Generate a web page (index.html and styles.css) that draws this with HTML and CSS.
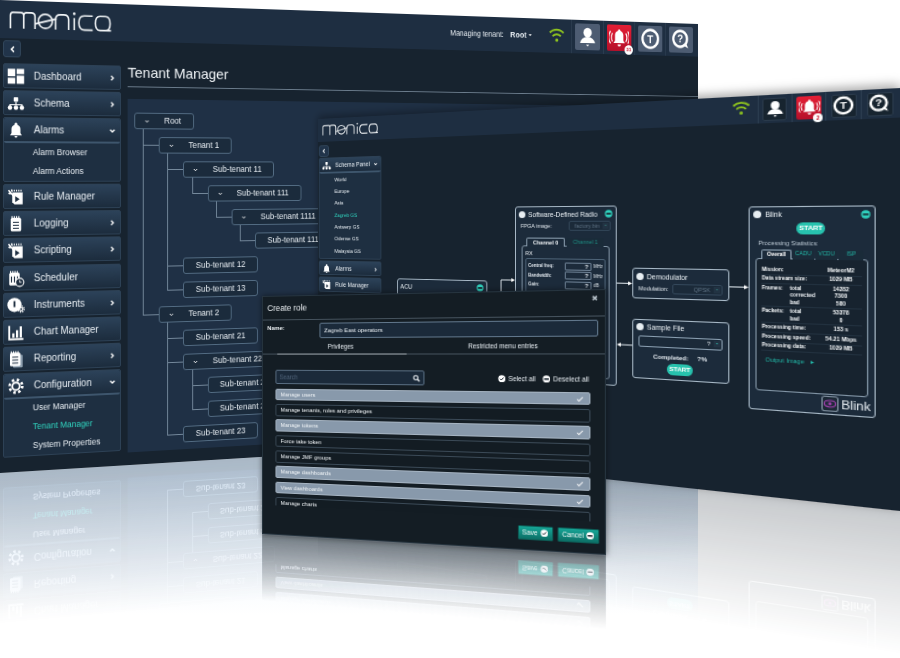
FILE: index.html
```html
<!DOCTYPE html>
<html lang="en">
<head>
<meta charset="utf-8">
<title>Monica</title>
<link rel="stylesheet" href="styles.css">
</head>
<body>
<svg class="sprite" aria-hidden="true">
  <symbol id="i-dash" viewBox="0 0 24 24"><rect x="1" y="2" width="10" height="10"/><rect x="13" y="2" width="10" height="7"/><rect x="1" y="14" width="10" height="8"/><rect x="13" y="11" width="10" height="11"/></symbol>
  <symbol id="i-schema" viewBox="0 0 24 24"><rect x="9" y="4" width="6" height="6" rx="1"/><path d="M12 10v4M4 16v-2h16v2" fill="none" stroke="currentColor" stroke-width="1.500"/><circle cx="4" cy="18" r="3"/><circle cx="12" cy="18" r="3"/><circle cx="20" cy="18" r="3"/></symbol>
  <symbol id="i-bell" viewBox="0 0 24 24"><path d="M12 2a2 2 0 0 1 2 2v1a6 6 0 0 1 4 6v5l2 3H4l2-3v-5a6 6 0 0 1 4-6V4a2 2 0 0 1 2-2zM10 20h4a2 2 0 0 1-4 0z"/></symbol>
  <symbol id="i-rule" viewBox="0 0 24 24"><path d="M7 6h14v16H10l-3-3z"/><path d="M2 3l7 8M6 2l1 3M2 7l3 1" fill="none" stroke="currentColor" stroke-width="2"/><path d="M9 3.500h12" stroke="currentColor" stroke-width="2.500" stroke-dasharray="1.500 1.500"/><path d="M11 11l6 4-6 4z" fill="#1d2d3f"/></symbol>
  <symbol id="i-log" viewBox="0 0 24 24"><rect x="5" y="4" width="14" height="18" rx="2"/><path d="M6 3h12" stroke="currentColor" stroke-width="3" stroke-dasharray="1.500 1.500"/><path d="M8 10h8M8 14h8M8 18h8" stroke="#1d2d3f" stroke-width="1.500"/></symbol>
  <symbol id="i-sched" viewBox="0 0 24 24"><rect x="3" y="4" width="14" height="17" rx="2"/><path d="M4 3h12" stroke="currentColor" stroke-width="3" stroke-dasharray="1.500 1.500"/><path d="M6 9v8M10 9v8M14 9v4" stroke="#1d2d3f" stroke-width="1.500"/><circle cx="17" cy="17" r="5.500" fill="#1d2d3f" stroke="currentColor" stroke-width="1.500"/><path d="M17 14v3h2.500" fill="none" stroke="currentColor" stroke-width="1.200"/></symbol>
  <symbol id="i-inst" viewBox="0 0 24 24"><circle cx="10" cy="11" r="9.500"/><path d="M10 6v8" stroke="#1d2d3f" stroke-width="2.500"/><circle cx="19" cy="17" r="2.200" fill="none" stroke="currentColor" stroke-width="1.500"/><circle cx="19" cy="17" r="4" fill="none" stroke="currentColor" stroke-width="1.800" stroke-dasharray="1.600 1.540"/></symbol>
  <symbol id="i-chart" viewBox="0 0 24 24"><path d="M3 3v18h19" fill="none" stroke="currentColor" stroke-width="2.500"/><rect x="7" y="13" width="3" height="6"/><rect x="12" y="9" width="3" height="10"/><rect x="17" y="4" width="3" height="15"/></symbol>
  <symbol id="i-report" viewBox="0 0 24 24"><rect x="8" y="6" width="13" height="17" rx="1.500" fill="#8fa0b0"/><rect x="4" y="3" width="14" height="18" rx="2"/><path d="M5 2.500h12" stroke="currentColor" stroke-width="3" stroke-dasharray="1.500 1.500"/><path d="M7 9h8M7 13h8M7 17h8" stroke="#1d2d3f" stroke-width="1.500"/></symbol>
  <symbol id="i-gear" viewBox="0 0 24 24"><circle cx="12" cy="12" r="5" fill="none" stroke="currentColor" stroke-width="2.500"/><circle cx="12" cy="12" r="8.500" fill="none" stroke="currentColor" stroke-width="3.500" stroke-dasharray="3.300 3.374"/></symbol>
  <symbol id="i-user" viewBox="0 0 24 24"><circle cx="12" cy="7.500" r="5"/><path d="M12 12c-5 0-8 3-9 6.500h18C20 15 17 12 12 12zM10 20h4l-2 2z"/></symbol>
  <symbol id="i-alarm" viewBox="0 0 24 24"><path d="M12 3a1.500 1.500 0 0 1 1.500 1.500A5 5 0 0 1 17 9v6l2 2.500H5L7 15V9a5 5 0 0 1 3.500-4.500A1.500 1.500 0 0 1 12 3zM10 19h4a2 2 0 0 1-4 0z"/><path d="M4 7a9 9 0 0 0 0 9M1.500 5a13 13 0 0 0 0 13M20 7a9 9 0 0 1 0 9M22.500 5a13 13 0 0 1 0 13" fill="none" stroke="currentColor" stroke-width="1.300"/></symbol>
  <symbol id="i-wifi" viewBox="0 0 24 24"><path d="M2 9.500a14.500 14.500 0 0 1 20 0M6 14a8.500 8.500 0 0 1 12 0" fill="none" stroke="currentColor" stroke-width="2.600"/><circle cx="12" cy="19" r="2.200"/></symbol>
  <symbol id="i-check" viewBox="0 0 24 24"><circle cx="12" cy="12" r="11"/><path d="M6.500 12l4 4 7-8" fill="none" stroke="#16212b" stroke-width="3"/></symbol>
  <symbol id="i-minus" viewBox="0 0 24 24"><circle cx="12" cy="12" r="11"/><rect x="5" y="9.500" width="14" height="5" fill="#16212b"/></symbol>
  <symbol id="i-tick" viewBox="0 0 24 24"><path d="M3 13l6 6L21 6" fill="none" stroke="currentColor" stroke-width="3"/></symbol>
  <symbol id="i-search" viewBox="0 0 24 24"><circle cx="10" cy="10" r="6.500" fill="none" stroke="currentColor" stroke-width="3"/><path d="M15 15l6 6" stroke="currentColor" stroke-width="4"/></symbol>
  <symbol id="i-down" viewBox="0 0 24 24"><path d="M5 8l7 7 7-7" fill="none" stroke="currentColor" stroke-width="4"/></symbol>
  <symbol id="i-right" viewBox="0 0 24 24"><path d="M8 5l7 7-7 7" fill="none" stroke="currentColor" stroke-width="4"/></symbol>
  <symbol id="i-left" viewBox="0 0 24 24"><path d="M16 5l-7 7 7 7" fill="none" stroke="currentColor" stroke-width="4"/></symbol>
  <symbol id="i-logo" viewBox="0 0 110 22">
    <g fill="none" stroke="currentColor" stroke-width="1.700">
      <path d="M1 20V6q0-3 3-3h8q3 0 3 3v14M15 6q0-3 3-3h5q4 0 4 4v13"/>
      <circle cx="38" cy="11.500" r="7.500"/>
      <path d="M27 14.500l23-6"/>
      <path d="M49 20V9q0-5 5-5h4q5 0 5 5v11"/>
      <path d="M69 7v13"/>
      <path d="M89 4.500H80q-6 0-6 7.500T80 19.500h9"/>
      <path d="M100 4.500h-3q-5 0-5 7.500T97 19.500h6q5 0 5-7.500T103 4.500zM104 19.500h5"/>
    </g>
    <circle cx="69" cy="2.500" r="1.400" fill="currentColor"/>
  </symbol>
</svg>

<main class="stage">
  <div class="floor"></div>

  <!-- Tenant Manager window -->
  <section class="window win-tenant">
    <header class="topbar tenant-topbar">
      <svg class="logo logo-lg" role="img" aria-label="monica"><use href="#i-logo"/></svg>
      <div class="topbar-tools">
        <span class="managing">Managing tenant:</span>
        <strong class="managing-root">Root <i class="caret"></i></strong>
        <svg class="wifi"><use href="#i-wifi"/></svg>
        <span class="sep"></span>
        <span class="tool"><svg><use href="#i-user"/></svg></span>
        <span class="sep"></span>
        <span class="tool tool-red"><svg><use href="#i-alarm"/></svg><b class="badge">31</b></span>
        <span class="sep"></span>
        <span class="tool"><svg viewBox="0 0 24 24"><circle cx="12" cy="12" r="9.500" fill="none" stroke="#fff" stroke-width="2.800"/><text x="12" y="16.500" class="glyph">T</text></svg></span>
        <span class="sep"></span>
        <span class="tool"><svg viewBox="0 0 24 24"><circle cx="11" cy="11" r="8.500" fill="none" stroke="#fff" stroke-width="2.800"/><path d="M15 18l6 3-3-6z" fill="#fff"/><text x="11" y="15" class="glyph">?</text></svg></span>
      </div>
    </header>
    <div class="tenant-body">
      <div class="tenant-side">
        <button class="back"><svg><use href="#i-left"/></svg></button>
        <nav class="menu">
          <a class="menu-item"><svg class="mi"><use href="#i-dash"/></svg>Dashboard<svg class="chev"><use href="#i-right"/></svg></a>
          <a class="menu-item"><svg class="mi"><use href="#i-schema"/></svg>Schema<svg class="chev"><use href="#i-right"/></svg></a>
          <div class="menu-open">
            <a class="menu-item"><svg class="mi"><use href="#i-bell"/></svg>Alarms<svg class="chev"><use href="#i-down"/></svg></a>
            <ul class="submenu"><li>Alarm Browser</li><li>Alarm Actions</li></ul>
          </div>
          <a class="menu-item"><svg class="mi"><use href="#i-rule"/></svg>Rule Manager</a>
          <a class="menu-item"><svg class="mi"><use href="#i-log"/></svg>Logging<svg class="chev"><use href="#i-right"/></svg></a>
          <a class="menu-item"><svg class="mi"><use href="#i-rule"/></svg>Scripting<svg class="chev"><use href="#i-right"/></svg></a>
          <a class="menu-item"><svg class="mi"><use href="#i-sched"/></svg>Scheduler</a>
          <a class="menu-item"><svg class="mi"><use href="#i-inst"/></svg>Instruments<svg class="chev"><use href="#i-right"/></svg></a>
          <a class="menu-item"><svg class="mi"><use href="#i-chart"/></svg>Chart Manager</a>
          <a class="menu-item"><svg class="mi"><use href="#i-report"/></svg>Reporting<svg class="chev"><use href="#i-right"/></svg></a>
          <div class="menu-open">
            <a class="menu-item"><svg class="mi"><use href="#i-gear"/></svg>Configuration<svg class="chev"><use href="#i-down"/></svg></a>
            <ul class="submenu"><li>User Manager</li><li class="active">Tenant Manager</li><li>System Properties</li></ul>
          </div>
        </nav>
      </div>
      <div class="tenant-main">
        <h1 class="page-title">Tenant Manager</h1>
        <div class="tree-panel">
          <ul class="tree">
            <li><span class="tn has"><svg><use href="#i-down"/></svg>Root</span>
              <ul>
                <li><span class="tn has"><svg><use href="#i-down"/></svg>Tenant 1</span>
                  <ul>
                    <li><span class="tn has"><svg><use href="#i-down"/></svg>Sub-tenant 11</span>
                      <ul>
                        <li><span class="tn has"><svg><use href="#i-down"/></svg>Sub-tenant 111</span>
                          <ul>
                            <li><span class="tn has"><svg><use href="#i-down"/></svg>Sub-tenant 1111</span>
                              <ul><li><span class="tn">Sub-tenant 11111</span></li></ul>
                            </li>
                          </ul>
                        </li>
                      </ul>
                    </li>
                    <li><span class="tn">Sub-tenant 12</span></li>
                    <li><span class="tn">Sub-tenant 13</span></li>
                  </ul>
                </li>
                <li><span class="tn has"><svg><use href="#i-down"/></svg>Tenant 2</span>
                  <ul>
                    <li><span class="tn">Sub-tenant 21</span></li>
                    <li><span class="tn has"><svg><use href="#i-down"/></svg>Sub-tenant 22</span>
                      <ul>
                        <li><span class="tn">Sub-tenant 221</span></li>
                        <li><span class="tn">Sub-tenant 222</span></li>
                      </ul>
                    </li>
                    <li><span class="tn">Sub-tenant 23</span></li>
                  </ul>
                </li>
              </ul>
            </li>
          </ul>
        </div>
      </div>
    </div>
  </section>

  <!-- Schema window -->
  <section class="window win-schema">
    <header class="topbar schema-topbar">
      <svg class="logo logo-sm" role="img" aria-label="monica"><use href="#i-logo"/></svg>
      <div class="schema-tools">
        <svg class="wifi"><use href="#i-wifi"/></svg>
        <span class="sep"></span>
        <span class="tool tool-dark"><svg><use href="#i-user"/></svg></span>
        <span class="sep"></span>
        <span class="tool tool-red"><svg><use href="#i-alarm"/></svg><b class="badge">2</b></span>
        <span class="sep"></span>
        <span class="tool tool-dark"><svg viewBox="0 0 24 24"><circle cx="12" cy="12" r="9.500" fill="none" stroke="#fff" stroke-width="2.800"/><text x="12" y="16.500" class="glyph">T</text></svg></span>
        <span class="sep"></span>
        <span class="tool tool-dark"><svg viewBox="0 0 24 24"><circle cx="11" cy="11" r="8.500" fill="none" stroke="#fff" stroke-width="2.800"/><path d="M15 18l6 3-3-6z" fill="#fff"/><text x="11" y="15" class="glyph">?</text></svg></span>
      </div>
    </header>
    <aside class="schema-side">
      <button class="back"><svg><use href="#i-left"/></svg></button>
      <div class="menu-open">
        <a class="menu-item"><svg class="mi"><use href="#i-schema"/></svg>Schema Panel<svg class="chev"><use href="#i-down"/></svg></a>
        <ul class="submenu"><li>World</li><li>Europe</li><li>Asia</li><li class="active">Zagreb GS</li><li>Antwerp GS</li><li>Odense GS</li><li>Malaysia GS</li></ul>
      </div>
      <a class="menu-item"><svg class="mi"><use href="#i-bell"/></svg>Alarms<svg class="chev"><use href="#i-right"/></svg></a>
      <a class="menu-item"><svg class="mi"><use href="#i-rule"/></svg>Rule Manager</a>
    </aside>

    <svg class="wires" viewBox="0 0 582 372">
      <path d="M216 200V177H229M335 177.500H348M440 178.500H455M350 238H337"/>
      <path class="tip" d="M227 175l4 2-4 2zM346 175.500l4 2-4 2zM453 176.500l4 2-4 2zM339 236l-4 2 4 2z"/>
    </svg>

    <section class="node node-acu">
      <header class="node-head"><h3>ACU</h3><svg class="node-min"><use href="#i-minus"/></svg></header>
    </section>

    <section class="node node-sdr">
      <header class="node-head"><span class="dot"></span><h3>Software-Defined Radio</h3><svg class="node-min"><use href="#i-minus"/></svg></header>
      <div class="field"><label>FPGA image:</label><span class="select sel-fpga">factory.bin<i></i></span></div>
      <div class="tabs"><span class="tab on">Channel 0</span><span class="tab">Channel 1</span></div>
      <div class="tab-panel">
        <div class="rx-title">RX</div>
        <div class="rx-box">
          <div class="rx-row"><label>Central freq:</label><span class="rx-val">?</span><em>MHz</em></div>
          <div class="rx-row"><label>Bandwidth:</label><span class="rx-val">?</span><em>MHz</em></div>
          <div class="rx-row"><label>Gain:</label><span class="rx-val">?</span><em>dB</em></div>
        </div>
      </div>
    </section>

    <section class="node node-demod">
      <header class="node-head"><span class="dot"></span><h3>Demodulator</h3></header>
      <div class="field"><label>Modulation:</label><span class="select sel-qpsk">QPSK<i></i></span></div>
    </section>

    <section class="node node-sample">
      <header class="node-head"><span class="dot"></span><h3>Sample File</h3></header>
      <span class="select sel-file">?<i class="on"></i></span>
      <div class="completed"><span>Completed:</span><span>?%</span></div>
      <span class="pill pill-sample">START</span>
    </section>

    <section class="node node-blink">
      <header class="node-head"><span class="dot"></span><h3>Blink</h3><svg class="node-min"><use href="#i-minus"/></svg></header>
      <span class="pill pill-blink">START</span>
      <div class="stats-title">Processing Statistics:</div>
      <div class="tabs blink-tabs"><span class="tab on">Overall</span><span class="tab">CADU</span><span class="tab">VCDU</span><span class="tab">ISP</span></div>
      <div class="tab-panel stats">
        <div class="st-row"><b>Mission:</b><span></span><b>MeteorM2</b></div>
        <div class="st-row"><b>Data stream size:</b><span></span><b>1029 MB</b></div>
        <div class="st-row"><b>Frames:</b><span>total<br>corrected<br>bad</span><b>14282<br>7300<br>580</b></div>
        <div class="st-row"><b>Packets:</b><span>total<br>bad</span><b>53378<br>0</b></div>
        <div class="st-row"><b>Processing time:</b><span></span><b>153 s</b></div>
        <div class="st-row"><b>Processing speed:</b><span></span><b>54.21 Mbps</b></div>
        <div class="st-row"><b>Processing data:</b><span></span><b>1029 MB</b></div>
        <div class="output">Output Image <i>&#9656;</i></div>
      </div>
      <div class="blink-logo">
        <svg viewBox="0 0 24 24"><rect x="1" y="1" width="22" height="22" rx="3" fill="#1c2936" stroke="#9fb0c0" stroke-width="1.500"/><ellipse cx="12" cy="12" rx="8" ry="5" fill="none" stroke="#9a3fa8" stroke-width="1.800"/><circle cx="12" cy="12" r="2.500" fill="#9a3fa8"/></svg>
        <span>Blink</span>
      </div>
    </section>
  </section>

  <!-- Create role dialog -->
  <section class="window win-dialog">
    <header class="dlg-head"><h2>Create role</h2><span class="dlg-close">&#10006;</span></header>
    <div class="dlg-name"><label>Name:</label><span class="dlg-input">Zagreb East operators</span></div>
    <div class="dlg-tabs"><span class="dlg-tab on">Privileges</span><span class="dlg-tab">Restricted menu entries</span></div>
    <div class="dlg-tools">
      <span class="dlg-search">Search<svg><use href="#i-search"/></svg></span>
      <span class="dlg-all"><svg><use href="#i-check"/></svg>Select all</span>
      <span class="dlg-all"><svg><use href="#i-minus"/></svg>Deselect all</span>
    </div>
    <ul class="priv-list">
      <li class="on">Manage users<svg><use href="#i-tick"/></svg></li>
      <li>Manage tenants, roles and privileges</li>
      <li class="on">Manage tokens<svg><use href="#i-tick"/></svg></li>
      <li>Force take token</li>
      <li>Manage JMF groups</li>
      <li class="on">Manage dashboards<svg><use href="#i-tick"/></svg></li>
      <li class="on">View dashboards<svg><use href="#i-tick"/></svg></li>
      <li>Manage charts</li>
    </ul>
    <div class="dlg-actions">
      <button class="btn">Save<svg><use href="#i-check"/></svg></button>
      <button class="btn">Cancel<svg><use href="#i-minus"/></svg></button>
    </div>
  </section>
</main>
</body>
</html>
```
FILE: styles.css
```css
* { box-sizing: border-box; }
html, body { margin: 0; padding: 0; background: #fff; }
body { font-family: "Liberation Sans", Arial, sans-serif; color: #e8eef3; }
.sprite { position: absolute; width: 0; height: 0; }
.stage { position: relative; width: 900px; height: 658px; overflow: hidden; background: #fff; }
ul { list-style: none; margin: 0; padding: 0; }
h1, h2, h3 { margin: 0; font-weight: normal; }
a { display: flex; }
svg { fill: currentColor; }
.glyph { font: bold 12px "Liberation Sans", Arial, sans-serif; fill: #fff; text-anchor: middle; }

/* Faint blue floor tint under the reflection of the tenant window */
.floor { position: absolute; left: 0; top: 420px; width: 698px; height: 195px; background: linear-gradient(#dcebfa 25%, #fff); clip-path: polygon(0 53px, 100% 10px, 100% 100%, 0 100%); }

/* Windows sit on a free canvas; each one is warped to its perspective quad. */
.window { position: absolute; left: 0; top: 0; transform-origin: 0 0; overflow: hidden; background: #17232f; }
.win-tenant {
  width: 813px; height: 473px;
  transform: matrix3d(1.00023,.03439,0,.00020299, 0,1,0,0, 0,0,1,0, 0,0,0,1);
  -webkit-box-reflect: below 0 linear-gradient(to bottom, transparent 68%, rgba(0,0,0,.13) 85%, rgba(0,0,0,.26));
}
.win-schema {
  width: 582px; height: 372px;
  transform: matrix3d(.65636,-.086866,0,-.00038183, 0,.88441,0,0, 0,0,1,0, 318,119,0,1);
  box-shadow: 0 -3px 9px rgba(0,0,0,.35);
  -webkit-box-reflect: below 0 linear-gradient(to bottom, transparent 66%, rgba(0,0,0,.24));
}
.win-dialog {
  width: 344px; height: 252px; background: #141d24; border: 1px solid #26343f;
  transform: matrix3d(.81456,-.10878,0,-.00030599, 0,.94444,0,0, 0,0,1,0, 262,296,0,1);
  box-shadow: 0 0 6px rgba(0,0,0,.5);
  -webkit-box-reflect: below 0 linear-gradient(to bottom, transparent 72%, rgba(0,0,0,.5));
}

/* Top bars */
.topbar { display: flex; justify-content: space-between; align-items: center; background: #1e2e41; }
.tenant-topbar { height: 38px; padding-left: 8px; }
.schema-topbar { height: 26px; padding-left: 5px; }
.logo { color: #f2f5f7; display: block; }
.logo-lg { width: 108px; height: 21px; }
.logo-sm { width: 71px; height: 14px; }
.topbar-tools { display: flex; align-items: center; height: 100%; padding-right: 3px; }
.managing { font-size: 8.500px; margin-right: 8px; }
.managing-root { font-size: 9px; margin-right: 21px; }
.caret { display: inline-block; border: 2px solid transparent; border-top-color: #fff; border-bottom: 0; vertical-align: 2px; }
.wifi { color: #8dc21f; }
.topbar-tools .wifi { width: 21px; height: 21px; margin: -4px 8px 0 0; }
.sep { width: 1px; height: 100%; background: #2b3d50; }
.tool { position: relative; display: flex; align-items: center; justify-content: center; width: 32px; height: 30px; margin: 0 4px; background: #4d5c72; border-radius: 2px; color: #fff; }
.tool svg { width: 26px; height: 26px; }
.tool-red { background: linear-gradient(#e41f35, #b5102a); }
.badge { position: absolute; right: -2px; bottom: -4px; width: 11px; height: 11px; border-radius: 50%; background: #fff; color: #c8142c; font-size: 6px; line-height: 11px; text-align: center; }
.schema-tools { display: flex; align-items: center; height: 100%; padding-right: 2px; }
.schema-tools .wifi { width: 17px; height: 17px; margin: -5px 6px 0 0; }
.schema-tools .tool { width: 21px; height: 21px; margin: 0 3.400px; }
.schema-tools .tool svg { width: 18px; height: 18px; }
.tool-dark { background: #17242f; border: 1px solid #2a3a4b; }
.schema-tools .badge { width: 8px; height: 8px; font-size: 5px; line-height: 8px; bottom: -3px; right: -1px; }

/* Tenant window body */
.tenant-body { display: flex; height: 435px; background: #17232f; }
.tenant-side { width: 126px; padding: 2px 2px 0 3px; flex: none; }
.back { display: flex; align-items: center; justify-content: center; width: 18px; height: 17px; padding: 0; margin-bottom: 6px; border: 1px solid #31465b; border-radius: 3px; background: #21344a; color: #fff; }
.back svg { width: 9px; height: 10px; }
.menu { display: flex; flex-direction: column; gap: 2.100px; }
.menu-item { display: flex; align-items: center; height: 25px; padding-left: 30px; position: relative; font-size: 10px; color: #e8eef3; background: linear-gradient(#2c4259, #1c2c3d); border: 1px solid #2d4155; border-radius: 2px; }
.mi { position: absolute; left: 3px; top: 3px; width: 18px; height: 18px; color: #fff; }
.chev { position: absolute; right: 4px; top: 8px; width: 8px; height: 8px; color: #fff; }
.menu-open { background: #1e2f41; border: 1px solid #2d4155; border-radius: 2px; }
.menu-open > .menu-item { border-width: 0 0 2px; border-bottom-color: #3e566d; }
.submenu { padding-left: 29px; font-size: 8.500px; }
.submenu li { height: 19px; line-height: 19px; }
.submenu .active { color: #30d5c0; }

.tenant-main { flex: 1; display: flex; flex-direction: column; padding-left: 5px; }
.page-title { height: 47px; padding-top: 23px; font-size: 15px; line-height: 18px; color: #eef2f5; border-bottom: 1px solid #6b7c8c; }
.tree-panel { margin-top: 12px; height: 363px; background: #1f3045; padding: 5.500px 0 0 6.700px; overflow: hidden; font-size: 8.700px; }
.tree ul { padding-left: 26.300px; }
.tree li { position: relative; padding-top: 8.500px; }
.tree > li { padding-top: 8.500px; }
.tree ul > li::before { content: ""; position: absolute; left: -16.800px; top: 0; bottom: 0; width: 1px; background: #75899c; }
.tree ul > li::after { content: ""; position: absolute; left: -16.800px; top: 16.750px; width: 16.800px; height: 1px; background: #75899c; }
.tree ul > li:last-child::before { bottom: auto; height: 17px; }
.tn { position: relative; z-index: 1; display: inline-block; height: 16.500px; line-height: 14.500px; padding: 0 13px 0 12.500px; border: 1px solid #536c83; border-radius: 3px; background: #1b2b3c; color: #e8eef3; }
.tn.has { padding-left: 31px; }
.tn svg { position: absolute; left: 9px; top: 4.500px; width: 7px; height: 6px; color: #fff; }

/* Schema window */
.schema-side { position: absolute; left: 1px; top: 30px; width: 78px; }
.schema-side .back { width: 13px; height: 13px; margin-bottom: 1px; }
.schema-side .back svg { width: 7px; height: 7px; }
.schema-side .menu-item { height: 16.500px; padding-left: 20px; font-size: 6.600px; }
.schema-side .mi { left: 3px; top: 2px; width: 12px; height: 12px; }
.schema-side .chev { top: 5px; right: 3px; width: 6px; height: 6px; }
.schema-side .submenu { padding: 1.300px 0 1px 19px; font-size: 5.800px; }
.schema-side .submenu li { height: 13.300px; line-height: 13.300px; }
.schema-side > .menu-item { margin-top: 2px; }

.wires { position: absolute; left: 0; top: 0; width: 582px; height: 372px; fill: none; stroke: #dfe7ed; stroke-width: 1; }
.wires .tip { fill: #fff; stroke: none; }

.node { position: absolute; padding: 1px 3px; background: #1c2b3b; border: 1px solid #a9bac8; border-radius: 3px; font-size: 5.500px; color: #dfe6ec; }
.node-head { display: flex; align-items: center; gap: 3px; height: 12px; }
.node-head h3 { flex: 1; font-size: 6.700px; color: #eaf0f4; white-space: nowrap; }
.dot { width: 7px; height: 7px; border-radius: 50%; background: #e8eef2; }
.node-min { width: 8px; height: 8px; color: #2fd0bd; }
.node-acu { left: 97.800px; top: 178px; width: 103px; height: 80px; }
.node-sdr { left: 231px; top: 101px; width: 104px; height: 178px; }
.node-demod { left: 350px; top: 162.400px; width: 90px; height: 30px; }
.node-sample { left: 350px; top: 211.700px; width: 90px; height: 58px; }
.node-blink { left: 457.400px; top: 102.600px; width: 105.600px; height: 189px; }

.field { display: flex; align-items: center; justify-content: space-between; margin-top: 1px; padding: 0 2px; }
.select { position: relative; display: block; height: 10px; line-height: 8px; padding-right: 10px; text-align: right; background: #1b2a39; border: 1px solid #33475a; border-radius: 2px; color: #5e7284; }
.select i { position: absolute; right: 1px; top: 1px; width: 6px; height: 6px; background: #223343; }
.select i::after { content: ""; position: absolute; left: 1.500px; top: 2px; border: 1.500px solid transparent; border-top-color: #3a8f8a; border-bottom: 0; }
.select i.on::after { border-top-color: #33d1bd; }
.sel-fpga { width: 42px; }
.sel-qpsk { width: 46px; }
.sel-file { margin: 2px 2px 0; height: 11px; line-height: 9px; color: #dfe6ec; border-color: #8ba0b2; }
.tabs { display: flex; gap: 2px; margin: 7px 0 0 8px; }
.tab { height: 9px; line-height: 8px; padding: 0 6px; border-radius: 2px 2px 0 0; background: #1a2b39; color: #1e8f85; }
.tab.on { color: #f0f4f7; background: #1c2b3b; border: 1px solid #90a4b5; border-bottom: 0; font-weight: bold; }
.tab-panel { margin: -1px 3px 0; height: 132px; border: 1px solid #8295a6; border-radius: 3px; background: #1c2b3b; padding: 4px 3px; }
.rx-title { color: #f0f4f7; height: 6px; line-height: 6px; }
.rx-box { margin-top: 2px; padding: 2px; border: 1px solid #4e6478; border-radius: 2px; height: 40px; }
.rx-row { display: flex; align-items: center; gap: 2px; height: 9.500px; font-size: 4.500px; }
.rx-row label { flex: 1; font-weight: bold; }
.rx-val { width: 27px; height: 8px; line-height: 6.500px; padding-right: 2px; text-align: right; border: 1px solid #718599; border-radius: 1px; font-size: 6px; font-weight: bold; }
.rx-row em { width: 9px; font-style: normal; }
.completed { display: flex; justify-content: center; gap: 8px; margin-top: 6px; font-size: 6px; font-weight: bold; }
.pill { display: block; width: 24px; height: 11px; margin: 1.500px auto 0; border-radius: 6px; background: #27c2ae; color: #fff; font-size: 6px; font-weight: bold; line-height: 11px; text-align: center; }
.pill-sample { margin-top: 3px; }
.stats-title { margin: 5px 0 0 4px; font-size: 5.400px; color: #b8c5d0; }
.blink-tabs { margin: 3px 0 0 7px; gap: 1px; }
.blink-tabs .tab { padding: 0 2.400px; height: 9px; font-size: 4.800px; color: #22b3a4; }
.blink-tabs .tab.on { color: #fff; padding: 0 3.500px; }
.blink-tabs .tab:last-child { padding: 0 6px; }
.stats { margin: -1px 2px 0; padding: 6px 4px 0; height: 123px; background: #17232f; }
.st-row { display: grid; grid-template-columns: 24px 1fr 34px; padding: .800px 0 .500px; border-bottom: 1px solid #22313f; font-size: 4.700px; line-height: 6.300px; }
.st-row span { color: #f0f4f7; font-weight: bold; }
.st-row b { white-space: nowrap; color: #f4f7f9; }
.st-row > b:last-child { text-align: center; }
.output { margin: 5px 0 0 3px; font-size: 5.500px; color: #22b3a4; }
.output i { font-style: normal; margin-left: 4px; }
.blink-logo { display: flex; align-items: center; justify-content: flex-end; gap: 2px; margin-top: 1px; color: #e8eef3; font-size: 11px; line-height: 14px; }
.blink-logo svg { width: 14px; height: 14px; }

/* Dialog */
.dlg-head { position: relative; display: flex; align-items: center; height: 24.500px; padding-left: 5px; border-bottom: 1px solid #46535e; }
.dlg-head h2 { font-size: 8.800px; color: #eef2f5; }
.dlg-close { position: absolute; right: 6px; top: 4px; font-size: 7px; color: #b8c2ca; }
.dlg-name { display: flex; align-items: flex-start; height: 21px; padding: 3px 6px 0 5px; font-size: 6.200px; }
.dlg-name label { width: 57px; padding-top: 1px; font-weight: bold; color: #eef2f5; }
.dlg-input { flex: 1; height: 16.500px; line-height: 14.500px; padding-left: 4px; background: #1b2a3a; border: 1px solid #62788d; border-radius: 2px; }
.dlg-tabs { display: grid; grid-template-columns: 137px 1fr; height: 15px; padding-left: 16px; margin-right: 0; border-bottom: 1px solid #46535e; font-size: 6.300px; text-align: center; }
.dlg-tab { line-height: 12px; padding-top: 1px; }
.dlg-tab.on { border-bottom: 1px solid #a9b2b9; height: 15px; }
.dlg-tools { display: flex; align-items: center; height: 16px; margin-top: 16px; padding-left: 13.500px; font-size: 6.300px; }
.dlg-search { position: relative; width: 157px; height: 15.500px; line-height: 13.500px; padding-left: 4px; margin-right: 72px; background: #1b2a3a; border: 1px solid #5b7084; border-radius: 2px; color: #51647a; }
.dlg-search svg { position: absolute; right: 3px; top: 3px; width: 8px; height: 8px; color: #eef2f5; }
.dlg-all { display: flex; align-items: center; gap: 3px; margin-right: 6px; white-space: nowrap; }
.dlg-all svg { width: 7.500px; height: 7.500px; color: #fff; }
.priv-list { height: 123px; margin: 4px 0 0 13.500px; width: 315px; overflow: hidden; font-size: 6px; }
.priv-list li { position: relative; height: 12.800px; margin-bottom: 3.550px; padding-left: 5px; line-height: 11px; background: #131c23; border: 1px solid #3b4a57; border-radius: 2px; color: #f0f4f7; }
.priv-list li.on { background: #8899ab; border-color: #a6b4c2; }
.priv-list svg { position: absolute; right: 5px; top: 2px; width: 7px; height: 7px; color: #fff; }
.dlg-actions { display: flex; justify-content: flex-end; gap: 4px; margin-top: 7px; padding-right: 5px; }
.btn { display: flex; align-items: center; justify-content: center; gap: 2.500px; height: 14px; width: 33.500px; padding: 0; font: 6.300px "Liberation Sans", Arial, sans-serif; color: #eef7f6; background: linear-gradient(#16a596, #0c6f66); border: 1px solid #0d5a54; border-radius: 1px; }
.btn + .btn { width: 38px; }
.btn svg { width: 7.500px; height: 7.500px; color: #fff; }
```
